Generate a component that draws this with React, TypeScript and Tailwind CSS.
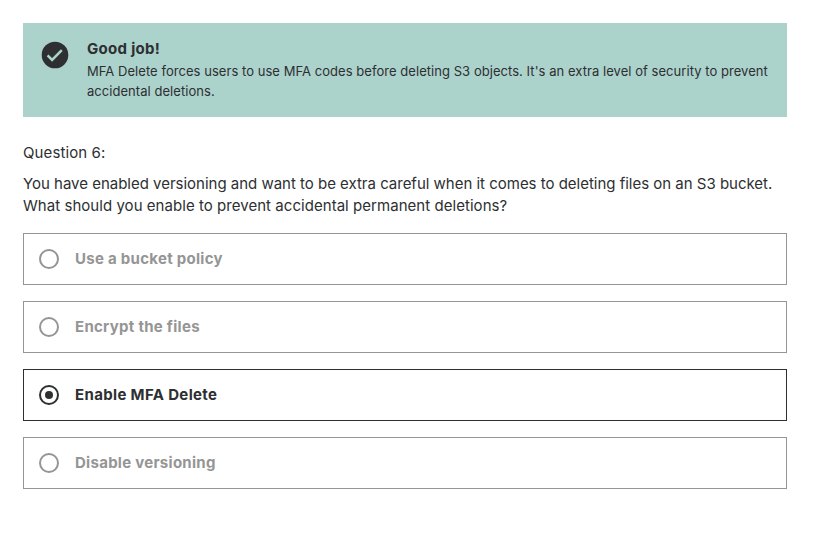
const options = [
  { label: "Use a bucket policy", selected: false },
  { label: "Encrypt the files", selected: false },
  { label: "Enable MFA Delete", selected: true },
  { label: "Disable versioning", selected: false },
];

function Radio({ selected }: { selected: boolean }) {
  return (
    <svg className="size-5 shrink-0" viewBox="0 0 20 20" fill="none">
      <circle cx="10" cy="10" r="9" stroke="currentColor" strokeWidth="2" />
      {selected && <circle cx="10" cy="10" r="4" fill="currentColor" />}
    </svg>
  );
}

export default function App() {
  return (
    <main className="h-[542px] w-[813px] bg-white pt-[23px] pl-[23px] font-['Inter',sans-serif] text-[#2d2f31]">
      <section className="flex h-[94px] w-[764px] bg-[#acd2cc] pt-4 pl-[18px]">
        <svg className="mt-0.5 size-7 shrink-0" viewBox="0 0 28 28" fill="none">
          <circle cx="14" cy="14" r="13.3" fill="#2d2f31" />
          <path d="m6.6 14.4 4.5 4.5 9.7-9.7" stroke="#acd2cc" strokeWidth="2.5" />
        </svg>
        <div className="ml-[18px] whitespace-nowrap">
          <h2 className="text-[15px] leading-[19px] font-bold tracking-[0.3px]">Good job!</h2>
          <p className="mt-[3px] text-[13px] leading-5 tracking-[0.047px]">
            MFA Delete forces users to use MFA codes before deleting S3 objects. It's an extra level of security to prevent
            <br />
            accidental deletions.
          </p>
        </div>
      </section>
      <div className="mt-[25px] text-[15px] leading-[22px] whitespace-nowrap">
        <p className="tracking-[0.1px]">Question 6:</p>
        <p className="mt-[9px] tracking-[-0.012px]">
          You have enabled versioning and want to be extra careful when it comes to deleting files on an S3 bucket.
          <br />
          <span className="tracking-[0.045px]">What should you enable to prevent accidental permanent deletions?</span>
        </p>
      </div>
      <ul className="mt-4 flex w-[764px] flex-col gap-4">
        {options.map((o) => (
          <li
            key={o.label}
            className={`flex h-[52px] items-center gap-4 border pl-[15px] text-[15px] font-bold ${o.selected ? "border-[#2d2f31] tracking-[0.35px] text-[#2d2f31]" : "border-[#959595] tracking-[0.28px] text-[#959595]"}`}
          >
            <Radio selected={o.selected} />
            <span>{o.label}</span>
          </li>
        ))}
      </ul>
    </main>
  );
}
